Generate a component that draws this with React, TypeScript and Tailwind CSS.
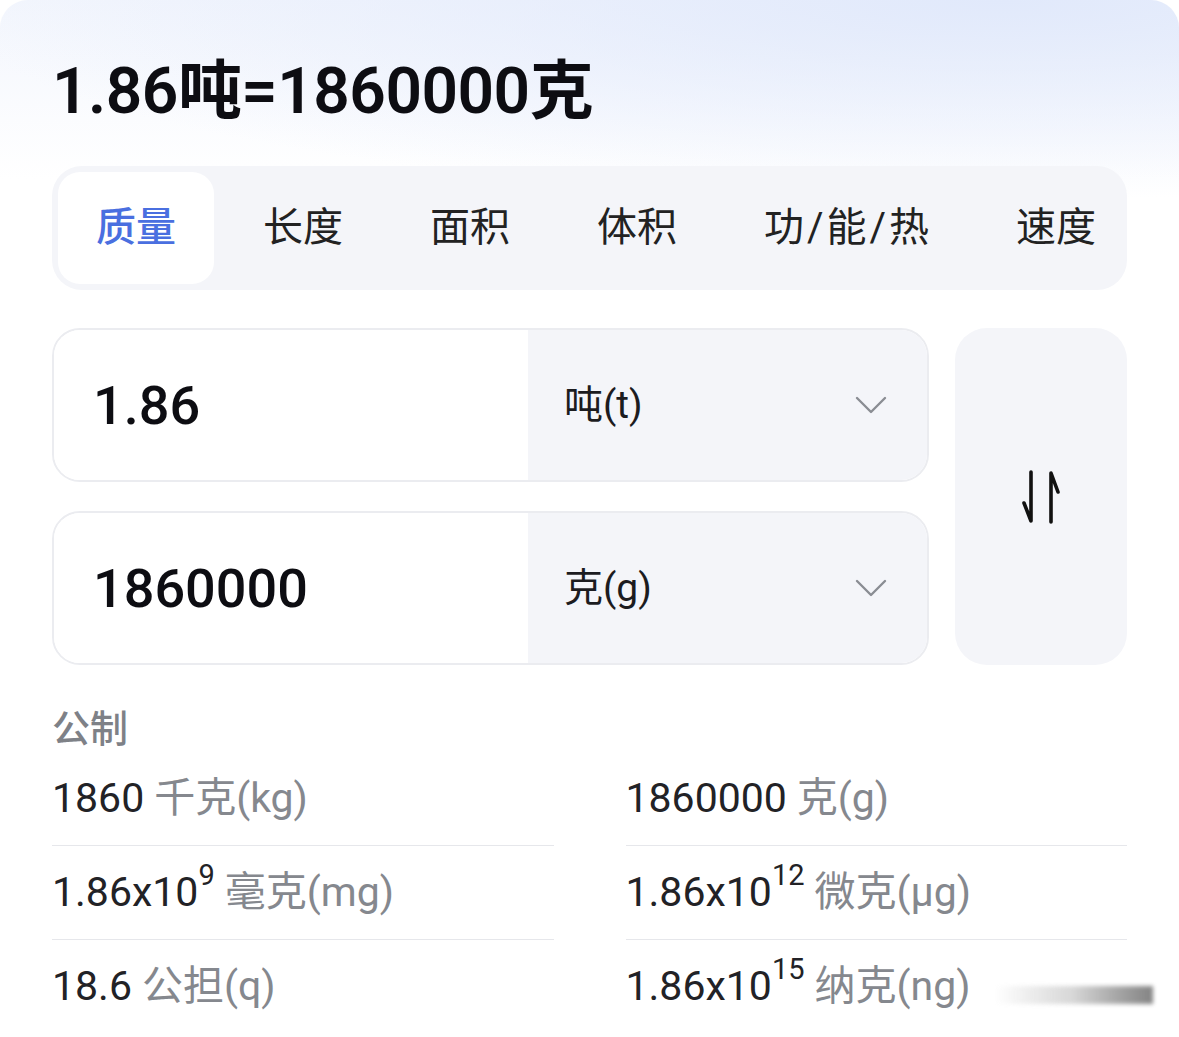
import React from 'react';

const font = { fontFamily: 'Roboto, "Noto Sans CJK SC", sans-serif' };

const SwapIcon = () => (
  <svg width="40" height="54" viewBox="0 0 40 54" fill="none" stroke="#111" strokeWidth="3.6" strokeLinecap="round" strokeLinejoin="round">
    <path d="M10 2 V51 L3 33" />
    <path d="M30 52 V3 L37 22" />
  </svg>
);

const Chevron = () => (
  <svg width="32" height="18" viewBox="0 0 32 18" fill="none" stroke="#8a8d93" strokeWidth="2.4" strokeLinecap="round" strokeLinejoin="round">
    <polyline points="2,2 16,16 30,2" />
  </svg>
);

const App = () => {
  const tabs = ['质量', '长度', '面积', '体积', '功/能/热', '速度'];

  const inputs = [
    { value: '1.86', unit: '吨(t)' },
    { value: '1860000', unit: '克(g)' }
  ];

  const results = [
    { num: '1860', unit: '千克(kg)' },
    { num: '1860000', unit: '克(g)' },
    { num: '1.86x10', exp: '9', unit: '毫克(mg)' },
    { num: '1.86x10', exp: '12', unit: '微克(μg)' },
    { num: '18.6', unit: '公担(q)' },
    { num: '1.86x10', exp: '15', unit: '纳克(ng)' }
  ];

  return (
    <div className="w-[1179px] h-[1037px] bg-white overflow-hidden relative" style={font}>
      <div className="h-full rounded-t-[28px] bg-[radial-gradient(90%_200px_at_85%_0%,#e1e9fb,transparent),linear-gradient(180deg,#f3f6fd_0%,#ffffff_180px)] px-[52px] pt-[60px]">

        {/* Title */}
        <h1 className="text-[64px] leading-none font-semibold text-[#0d0d12] tracking-[-0.5px]">1.86吨=1860000克</h1>

        {/* Category tabs */}
        <div className="mt-[42px] h-[124px] rounded-[30px] bg-[#f4f5f9] p-[6px] flex gap-[11px] overflow-hidden">
          {tabs.map((tab, i) => (
            <div
              key={tab}
              className={
                i === 0
                  ? 'shrink-0 whitespace-nowrap px-[38px] flex items-center rounded-[22px] bg-white text-[40px] font-medium text-[#4a6fe0]'
                  : 'shrink-0 whitespace-nowrap px-[38px] flex items-center text-[40px] text-[#222]'
              }
            >
              {tab.split('/').map((part, j) => (
                <React.Fragment key={part}>
                  {j > 0 && <span className="mx-[3px]">/</span>}
                  {part}
                </React.Fragment>
              ))}
            </div>
          ))}
        </div>

        {/* Converter */}
        <div className="mt-[38px] flex gap-[26px]">
          <div className="flex-1 flex flex-col gap-[29px]">
            {inputs.map((row) => (
              <div key={row.unit} className="h-[154px] flex rounded-[28px] border-2 border-[#ebecf0] overflow-hidden">
                <div className="w-[474px] bg-white flex items-center pl-[39px] text-[54px] font-medium text-[#0d0d12]">
                  {row.value}
                </div>
                <div className="flex-1 bg-[#f4f5f9] flex items-center justify-between pl-[36px] pr-[40px]">
                  <span className="text-[39px] text-[#1c1c1f]">{row.unit}</span>
                  <Chevron />
                </div>
              </div>
            ))}
          </div>
          <div className="w-[172px] rounded-[32px] bg-[#f4f5f9] flex items-center justify-center">
            <SwapIcon />
          </div>
        </div>

        {/* Results */}
        <div className="mt-[45px] text-[38px] leading-none font-medium text-[#7e8187]">公制</div>
        <div className="mt-[4px] grid grid-cols-2 gap-x-[72px]">
          {results.map((r, i) => (
            <div
              key={r.unit}
              className={
                i < 4
                  ? 'h-[94px] flex items-center border-b border-[#e6e7eb] text-[41px] whitespace-nowrap'
                  : 'h-[94px] flex items-center text-[41px] whitespace-nowrap'
              }
            >
              <span className="text-[#222226]">{r.num}</span>
              {r.exp && <span className="relative -top-[17px] text-[29px] text-[#222226]">{r.exp}</span>}
              <span className="ml-[10px] text-[#85888e]">{r.unit}</span>
            </div>
          ))}
        </div>
      </div>

      {/* watermark smudge */}
      <div className="absolute left-[995px] top-[986px] w-[158px] h-[18px] bg-gradient-to-r from-transparent via-[#bbb] to-[#333] blur-[2px] opacity-60" />
    </div>
  );
};

export default App;
